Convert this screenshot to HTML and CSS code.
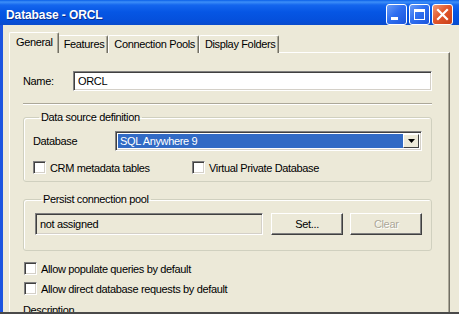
FILE: index.html
```html
<!DOCTYPE html>
<html lang="en">
<head>
  <meta charset="UTF-8">
  <title>Database - ORCL</title>
  <link rel="stylesheet" href="styles.css">
</head>
<body>
  <div class="window">
    <div class="titlebar">
      <span class="title">Database - ORCL</span>
      <div class="controls">
        <span class="ctl">
          <svg width="21" height="21" viewBox="0 0 21 21"><rect x="5" y="13" width="7" height="3" fill="#fff"/></svg>
        </span>
        <span class="ctl">
          <svg width="21" height="21" viewBox="0 0 21 21"><rect x="5.5" y="5.5" width="10" height="10" fill="none" stroke="#fff" stroke-width="1"/><rect x="5" y="5" width="11" height="3" fill="#fff"/></svg>
        </span>
        <span class="ctl ctl-close">
          <svg width="21" height="21" viewBox="0 0 21 21"><path d="M6 6 L15 15 M15 6 L6 15" stroke="#fff" stroke-width="2.2" stroke-linecap="square"/></svg>
        </span>
      </div>
    </div>

    <div class="frame">
      <div class="tabs">
        <span class="tab active">General</span>
        <span class="tab">Features</span>
        <span class="tab">Connection Pools</span>
        <span class="tab">Display Folders</span>
      </div>

      <div class="panel">
        <div class="name-row">
          <span class="name-label">Name:</span>
          <div class="field name-field">ORCL</div>
        </div>

        <div class="sep"></div>

        <fieldset class="group group-ds">
          <legend>Data source definition</legend>
          <div class="db-row">
            <span class="db-label">Database</span>
            <div class="select">
              <span class="select-value">SQL Anywhere 9</span>
              <span class="drop">
                <svg width="7" height="4" viewBox="0 0 7 4"><path d="M0 0 H7 L3.5 4 Z" fill="#000"/></svg>
              </span>
            </div>
          </div>
          <div class="check-row">
            <span class="check check-wide"><span class="box"></span>CRM metadata tables</span>
            <span class="check"><span class="box"></span>Virtual Private Database</span>
          </div>
        </fieldset>

        <fieldset class="group group-pool">
          <legend>Persist connection pool</legend>
          <div class="pool-row">
            <div class="field pool-field">not assigned</div>
            <span class="btn btn-set">Set...</span>
            <span class="btn btn-clear">Clear</span>
          </div>
        </fieldset>

        <span class="check single first"><span class="box"></span>Allow populate queries by default</span>
        <span class="check single"><span class="box"></span>Allow direct database requests by default</span>

        <div class="desc">Description</div>
      </div>
    </div>
  </div>
  <div class="edge"></div>
</body>
</html>
```

FILE: styles.css
```css
body {
  margin: 0;
  width: 459px;
  height: 315px;
  overflow: hidden;
  background-color: #ffffff;
  font-family: "Liberation Sans", Arial, sans-serif;
  font-size: 11px;
  letter-spacing: -0.35px;
  color: #000;
}

.window {
  height: 312px;
  display: flex;
  flex-direction: column;
  overflow: hidden;
}

/* title bar */
.titlebar {
  height: 25px;
  flex: none;
  display: flex;
  align-items: flex-start;
  justify-content: space-between;
  padding-left: 6px;
  background: linear-gradient(#0a5fe8 0, #3d8ff8 2px, #1466ee 5px, #0656e4 12px, #0550dc 20px, #0a4ccc 25px);
}

.title {
  margin-top: 3px;
  line-height: 25px;
  color: #fff;
  font-weight: bold;
  font-size: 12px;
  letter-spacing: -0.1px;
  text-shadow: 1px 1px 0 #0a2f8c;
}

.controls {
  display: flex;
  gap: 2px;
  margin-top: 4px;
  margin-right: 6px;
}

.ctl {
  width: 21px;
  height: 21px;
  box-sizing: border-box;
  border: 1px solid #fff;
  border-radius: 3px;
  background: linear-gradient(135deg, #6a9cf6, #2f6ff0 45%, #1b55dc);
  display: block;
  overflow: hidden;
}

.ctl svg {
  display: block;
  margin: -1px;
}

.ctl-close {
  background: linear-gradient(135deg, #f29a76, #e3582c 45%, #c9401a);
}

/* window body */
.frame {
  flex: 1;
  border-left: 3px solid #1b54e0;
  background-color: #ece9d8;
  padding: 8px 8px 0 6px;
  overflow: hidden;
}

.tabs {
  display: flex;
  align-items: flex-end;
  height: 20px;
  padding-left: 2px;
  margin-bottom: -1px;
  position: relative;
  z-index: 1;
}

.tab {
  height: 17px;
  line-height: 17px;
  padding: 0 3px 0 5px;
  border-top: 1px solid #fff;
  border-left: 1px solid #fff;
  border-right: 1px solid #716f64;
  box-shadow: inset -1px 0 #aca899;
  border-radius: 2px 2px 0 0;
  background-color: #ece9d8;
}

.tab.active {
  height: 20px;
  line-height: 19px;
  padding: 0 5px 0 6px;
  margin: 0 -1px 0 -2px;
  position: relative;
}

.panel {
  width: 409px;
  height: 300px;
  border-top: 1px solid #fff;
  border-left: 1px solid #fff;
  border-right: 1px solid #716f64;
  box-shadow: inset -1px 0 #aca899;
  padding: 18px 17px 0 13px;
}

.name-row {
  display: flex;
  align-items: center;
  height: 20px;
}

.name-label {
  width: 50px;
}

.field {
  box-sizing: border-box;
  border-top: 1px solid #808080;
  border-left: 1px solid #808080;
  border-bottom: 1px solid #fff;
  border-right: 1px solid #fff;
  box-shadow: inset 1px 1px #404040, inset -1px -1px #d4d0c8;
  padding-left: 4px;
  display: flex;
  align-items: center;
}

.name-field {
  flex: 1;
  height: 20px;
  background-color: #fff;
}

.sep {
  margin-top: 12px;
  border-top: 1px solid #aca899;
  border-bottom: 1px solid #fff;
}

/* group boxes */
.group {
  margin: 6px 0 0 0;
  border: 1px solid #d0d0bf;
  box-shadow: inset 1px 1px #fff;
  border-radius: 3px;
  min-width: 0;
}

.group legend {
  padding: 0 2px;
  margin-left: 6px;
  line-height: 13px;
}

.group-ds {
  padding: 7px 9px 7px 9px;
}

.db-row {
  display: flex;
  align-items: center;
  height: 20px;
}

.db-label {
  width: 82px;
}

.select {
  width: 307px;
  height: 20px;
  box-sizing: border-box;
  border-top: 1px solid #808080;
  border-left: 1px solid #808080;
  border-bottom: 1px solid #fff;
  border-right: 1px solid #fff;
  box-shadow: inset 1px 1px #404040, inset -1px -1px #d4d0c8;
  background-color: #fff;
  padding: 2px;
  display: flex;
}

.select-value {
  flex: 1;
  background-color: #316ac5;
  color: #fff;
  padding-left: 2px;
  line-height: 14px;
}

.drop {
  width: 16px;
  box-sizing: border-box;
  background-color: #ece9d8;
  border-top: 1px solid #fff;
  border-left: 1px solid #fff;
  border-bottom: 1px solid #404040;
  border-right: 1px solid #404040;
  display: flex;
  align-items: center;
  justify-content: center;
}

.check-row {
  display: flex;
  margin-top: 10px;
}

.check {
  display: flex;
  align-items: center;
  height: 13px;
  gap: 4px;
}

.check-wide {
  width: 159px;
}

.box {
  width: 13px;
  height: 13px;
  box-sizing: border-box;
  flex: none;
  border-top: 1px solid #808080;
  border-left: 1px solid #808080;
  border-bottom: 1px solid #fff;
  border-right: 1px solid #fff;
  box-shadow: inset 1px 1px #404040, inset -1px -1px #d4d0c8;
  background-color: #fff;
}

.group-pool {
  margin-top: 11px;
  padding: 7px 9px 15px 11px;
}

.pool-row {
  display: flex;
  align-items: center;
}

.pool-field {
  width: 229px;
  height: 22px;
  background-color: #ece9d8;
}

.btn {
  height: 22px;
  box-sizing: border-box;
  display: flex;
  align-items: center;
  justify-content: center;
  border-top: 1px solid #fff;
  border-left: 1px solid #fff;
  border-bottom: 1px solid #404040;
  border-right: 1px solid #404040;
  box-shadow: inset -1px -1px #808080;
}

.btn-set {
  width: 73px;
  margin-left: 8px;
}

.btn-clear {
  width: 72px;
  margin-left: 7px;
  color: #aca899;
  text-shadow: 1px 1px 0 #fff;
}

.single {
  margin-left: 1px;
}

.single.first {
  margin-top: 11px;
}

.single + .single {
  margin-top: 7px;
}

.desc {
  margin-top: 9px;
  line-height: 13px;
}

.edge {
  height: 2px;
  background-color: #4a4a4a;
}
```
